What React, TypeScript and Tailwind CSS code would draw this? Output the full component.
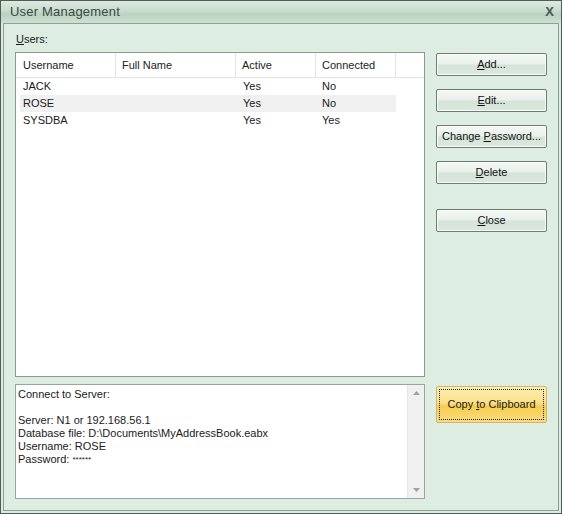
import React from "react";

function Btn({ children, className = "" }: { children: React.ReactNode; className?: string }) {
  return (
    <div
      className={
        "h-[23px] w-[111px] flex items-center justify-center rounded-[2px] border border-[#6d7d72] text-[11px] text-[#111] bg-[linear-gradient(to_bottom,#f4f8f5_0%,#e9f1eb_48%,#d5e3d8_52%,#dbe8de_100%)] shadow-[inset_0_0_0_1px_#fbfdfb] " +
        className
      }
    >
      {children}
    </div>
  );
}

export default function App() {
  const rows = [
    { u: "JACK", f: "", a: "Yes", c: "No", sel: false },
    { u: "ROSE", f: "", a: "Yes", c: "No", sel: true },
    { u: "SYSDBA", f: "", a: "Yes", c: "Yes", sel: false },
  ];
  return (
    <div className="w-[562px] h-[514px] border border-[#4f5e54] bg-[#dcebe0] flex flex-col font-['Liberation_Sans',Arial,sans-serif] text-[11px] text-[#1a1a1a] overflow-hidden">
      {/* title bar */}
      <div className="h-[22px] flex items-center justify-between pl-[9px] pr-[7px] bg-[linear-gradient(to_bottom,#dde9e0_0%,#c9dccf_45%,#b9d2c0_60%,#cfe0d4_100%)]">
        <span className="text-[13px] text-[#3e4a42] tracking-[0.2px]">User Management</span>
        <span className="text-[13px] font-bold text-[#4a5a4f]">X</span>
      </div>
      {/* body */}
      <div className="flex-1 mx-[2px] mb-[2px] border border-[#8da092] bg-[#deede2] pl-[11px] pt-[8px] flex flex-col">
        <div className="h-[14px] leading-[14px] pl-[1px]">
          <span className="underline">U</span>sers:
        </div>
        <div className="mt-[6px] flex">
          {/* list */}
          <div className="w-[410px] h-[325px] border border-[#8c9a90] bg-white flex flex-col">
            <div className="h-[25px] flex border-b border-[#e3e3e3] text-[#222]">
              <div className="w-[100px] pl-[7px] flex items-center border-r border-[#e3e3e3]">Username</div>
              <div className="w-[120px] pl-[6px] flex items-center border-r border-[#e3e3e3]">Full Name</div>
              <div className="w-[80px] pl-[6px] flex items-center border-r border-[#e3e3e3]">Active</div>
              <div className="w-[80px] pl-[6px] flex items-center border-r border-[#e3e3e3]">Connected</div>
              <div className="flex-1" />
            </div>
            <div className="pl-[4px]">
              {rows.map((r) => (
                <div
                  key={r.u}
                  className={"h-[17px] w-[376px] flex items-center " + (r.sel ? "bg-[#f0f0f0]" : "")}
                >
                  <div className="w-[96px] pl-[3px]">{r.u}</div>
                  <div className="w-[120px] pl-[6px]">{r.f}</div>
                  <div className="w-[80px] pl-[7px]">{r.a}</div>
                  <div className="w-[80px] pl-[6px]">{r.c}</div>
                </div>
              ))}
            </div>
          </div>
          {/* buttons */}
          <div className="ml-[11px] pt-[1px] flex flex-col">
            <Btn>
              <span><span className="underline">A</span>dd...</span>
            </Btn>
            <Btn className="mt-[13px]">
              <span><span className="underline">E</span>dit...</span>
            </Btn>
            <Btn className="mt-[13px]">
              <span>Change <span className="underline">P</span>assword...</span>
            </Btn>
            <Btn className="mt-[13px]">
              <span><span className="underline">D</span>elete</span>
            </Btn>
            <Btn className="mt-[25px]">
              <span><span className="underline">C</span>lose</span>
            </Btn>
          </div>
        </div>
        <div className="mt-[7px] flex">
          <div className="w-[410px] h-[115px] border border-[#9aa69d] bg-white flex">
            <div className="flex-1 pl-[2px] pt-[3px] leading-[13px] text-[11px]">
              <div>Connect to Server:</div>
              <div className="h-[13px]" />
              <div>Server: N1 or 192.168.56.1</div>
              <div>Database file: D:\Documents\MyAddressBook.eabx</div>
              <div>Username: ROSE</div>
              <div>Password: <span className="text-[8px] align-top">******</span></div>
            </div>
            <div className="w-[17px] bg-[#f0f0f0] border-l border-[#e6e6e6] flex flex-col items-center justify-between py-[6px]">
              <svg width="7" height="4" viewBox="0 0 7 4"><path d="M3.5 0L7 4H0Z" fill="#a0a0a0" /></svg>
              <svg width="7" height="4" viewBox="0 0 7 4"><path d="M0 0H7L3.5 4Z" fill="#a0a0a0" /></svg>
            </div>
          </div>
          <div className="ml-[11px] pt-[2px]">
            <div className="w-[111px] h-[37px] rounded-[2px] border border-[#d2b56a] p-[2px] bg-[linear-gradient(to_bottom,#fdeeb0_0%,#fbe08a_45%,#f6cd4e_55%,#f9dc7c_100%)]">
              <div className="w-full h-full border border-dotted border-[#222] flex items-center justify-center text-[11px]">
                <span>Copy <span className="underline">t</span>o Clipboard</span>
              </div>
            </div>
          </div>
        </div>
      </div>
    </div>
  );
}
